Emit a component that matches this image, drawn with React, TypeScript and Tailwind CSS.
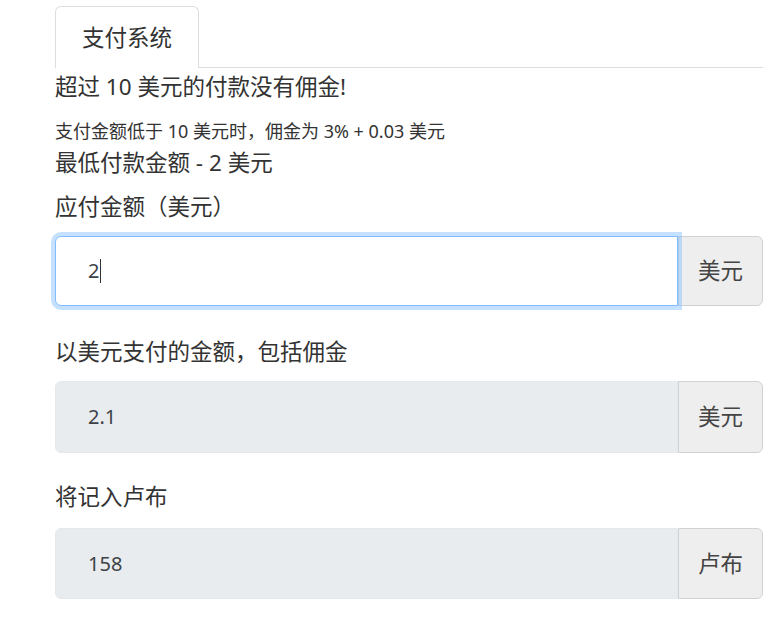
import React from "react";

const font = { fontFamily: '"Noto Sans", "Noto Sans CJK SC", sans-serif' };

function Row({ value, unit, focused, h }: { value: string; unit: string; focused?: boolean; h: string }) {
  return (
    <div className={`flex w-[708px] ${h}`}>
      {focused ? (
        <div className="relative z-10 flex h-full w-[623px] items-center rounded-l-[6px] border border-[#80bdff] bg-white pl-[32px] text-[20px] text-[#3d4246] shadow-[0_0_0_4px_rgba(128,189,255,0.45)]">
          <span>2</span>
          <span className="ml-[1px] h-[24px] w-[1px] bg-[#333]" />
        </div>
      ) : (
        <div className="flex h-full w-[623px] items-center rounded-l-[6px] border border-[#e6e9ec] bg-[#e9ecef] pl-[32px] text-[20px] text-[#3d4246]">
          {value}
        </div>
      )}
      <div className="flex h-full w-[85px] items-center justify-center rounded-r-[6px] border border-[#cfd2d5] bg-[#eeeeee] text-[22.5px] text-[#444]">
        {unit}
      </div>
    </div>
  );
}

export default function App() {
  return (
    <div className="min-h-[618px] w-[763px] overflow-hidden bg-white pl-[55px] text-[#333]" style={font}>
      <div className="flex pt-[6px]">
        <div className="flex h-[62px] w-[144px] items-center justify-center rounded-t-[6px] border border-b-0 border-[#dddddd] text-[22.5px] text-[#333]">
          支付系统
        </div>
        <div className="flex-1 border-b border-[#dddddd]" />
      </div>
      <div className="mt-[3px] text-[22.5px] leading-[32px]">超过 10 美元的付款没有佣金!</div>
      <div className="mt-[15px] text-[18px] leading-[26px]">支付金额低于 10 美元时，佣金为 3% + 0.03 美元</div>
      <div className="mt-[3px] text-[22.5px] leading-[32px]">最低付款金额 - 2 美元</div>
      <div className="mt-[11px] text-[22.5px] leading-[34px]">应付金额（美元）</div>
      <div className="mt-[12px]">
        <Row value="2" unit="美元" focused h="h-[70px]" />
      </div>
      <div className="mt-[28px] text-[22.5px] leading-[36px]">以美元支付的金额，包括佣金</div>
      <div className="mt-[11px]">
        <Row value="2.1" unit="美元" h="h-[72px]" />
      </div>
      <div className="mt-[26px] text-[22.5px] leading-[36px]">将记入卢布</div>
      <div className="mt-[13px]">
        <Row value="158" unit="卢布" h="h-[71px]" />
      </div>
    </div>
  );
}
